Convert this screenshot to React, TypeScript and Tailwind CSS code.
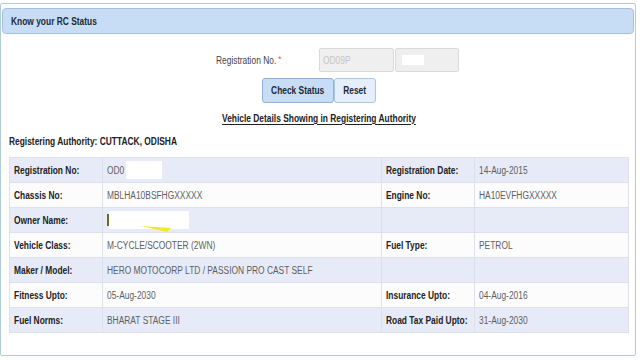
import React from "react";

const rows: [string, string, string, string][] = [
  ["Registration No:", "reg", "Registration Date:", "14-Aug-2015"],
  ["Chassis No:", "MBLHA10BSFHGXXXXX", "Engine No:", "HA10EVFHGXXXXX"],
  ["Owner Name:", "owner", "", ""],
  ["Vehicle Class:", "M-CYCLE/SCOOTER (2WN)", "Fuel Type:", "PETROL"],
  ["Maker / Model:", "HERO MOTOCORP LTD / PASSION PRO CAST SELF", "", ""],
  ["Fitness Upto:", "05-Aug-2030", "Insurance Upto:", "04-Aug-2016"],
  ["Fuel Norms:", "BHARAT STAGE III", "Road Tax Paid Upto:", "31-Aug-2030"],
];

// the screenshot's font is a narrow Arial; squeeze Liberation Sans to match
function T({
  children,
  center,
  underline,
}: {
  children: React.ReactNode;
  center?: boolean;
  underline?: boolean;
}) {
  return (
    <span
      className={`inline-block whitespace-nowrap scale-x-[0.84] ${center ? "origin-center" : "origin-left"} ${
        underline ? "underline underline-offset-[2px]" : ""
      }`}
    >
      {children}
    </span>
  );
}

function Value({ v }: { v: string }) {
  if (v === "reg") {
    return (
      <span className="flex items-center">
        <T>OD0</T>
        <span className="-ml-[2px] inline-block w-[36px] h-[18px] bg-white" />
      </span>
    );
  }
  if (v === "owner") {
    return (
      <span className="relative flex items-center">
        <span className="inline-block w-[2px] h-[12px] bg-[#6b6b20]" />
        <span className="inline-block w-[80px] h-[18px] bg-white" />
        <svg className="absolute left-[34px] top-[14px]" width="30" height="8" viewBox="0 0 30 8">
          <polygon points="0,1 30,3 26,7" fill="#eeea2a" />
        </svg>
      </span>
    );
  }
  return <T>{v}</T>;
}

export default function App() {
  return (
    <div className="w-[640px] h-[360px] bg-white pt-[3px] font-['Liberation_Sans',Arial,sans-serif] text-[10px]">
      <div className="w-[636px] h-[353px] border border-[#b3ccd4] rounded-[2px] px-[1px] pt-[4px]">
        <div className="h-[26px] bg-[#c7ddf6] border border-[#a3c1dd] rounded-[4px] flex items-center pl-[8px] font-bold text-[#1e2a33]">
          <T>Know your RC Status</T>
        </div>

        <div className="flex items-center mt-[14px] h-[24px]">
          <div className="w-[214px]" />
          <div className="w-[62px] text-[#444]">
            <T>Registration No.</T>
          </div>
          <span className="text-[#e06060] text-[9px] w-[41px]">*</span>
          <div className="w-[75px] h-[24px] bg-[#efefef] border border-[#d9d9d9] rounded-[2px] flex items-center pl-[3px] text-[#c4c4c4]">
            <T>OD09P</T>
          </div>
          <div className="ml-[1px] w-[64px] h-[24px] bg-[#efefef] border border-[#d9d9d9] rounded-[2px] flex items-center pl-[6px]">
            <span className="inline-block w-[22px] h-[10px] bg-white" />
          </div>
        </div>

        <div className="flex mt-[6px] h-[25px]">
          <div className="w-[260px]" />
          <div className="w-[72px] h-[25px] bg-[#c7ddf6] border border-[#8fb3d6] rounded-[3px] flex items-center justify-center font-bold text-[#1e2a33]">
            <T center>Check Status</T>
          </div>
          <div className="w-[42px] h-[25px] bg-[#e4effb] border border-[#a9c6e2] rounded-[3px] flex items-center justify-center font-bold text-[#1e2a33]">
            <T center>Reset</T>
          </div>
        </div>

        <div className="flex mt-[8px] h-[14px] items-center">
          <div className="w-[220px]" />
          <span className="font-bold text-[#222]">
            <T underline>Vehicle Details Showing in Registering Authority</T>
          </span>
        </div>

        <div className="mt-[8px] pl-[7px] h-[16px] flex items-center font-bold text-[#222]">
          <T>Registering Authority: CUTTACK, ODISHA</T>
        </div>

        <table className="ml-[7px] mt-[8px] w-[619px] border-collapse table-fixed">
          <colgroup>
            <col className="w-[93px]" />
            <col className="w-[279px]" />
            <col className="w-[93px]" />
            <col className="w-[154px]" />
          </colgroup>
          <tbody>
            {rows.map((r, i) => (
              <tr
                key={i}
                className={`h-[25px] ${i % 2 === 0 ? "bg-[#e7ebf8]" : "bg-[#fcfcfd]"}`}
              >
                <td className="pl-[4px] font-bold text-[#222] border border-[#dde1ea]">
                  <T>{r[0]}</T>
                </td>
                <td className="pl-[4px] text-[#5e5e5e] border border-[#dde1ea]">
                  <Value v={r[1]} />
                </td>
                <td className="pl-[4px] font-bold text-[#222] border border-[#dde1ea]">
                  <T>{r[2]}</T>
                </td>
                <td className="pl-[4px] text-[#5e5e5e] border border-[#dde1ea]">
                  <T>{r[3]}</T>
                </td>
              </tr>
            ))}
          </tbody>
        </table>
      </div>
    </div>
  );
}
